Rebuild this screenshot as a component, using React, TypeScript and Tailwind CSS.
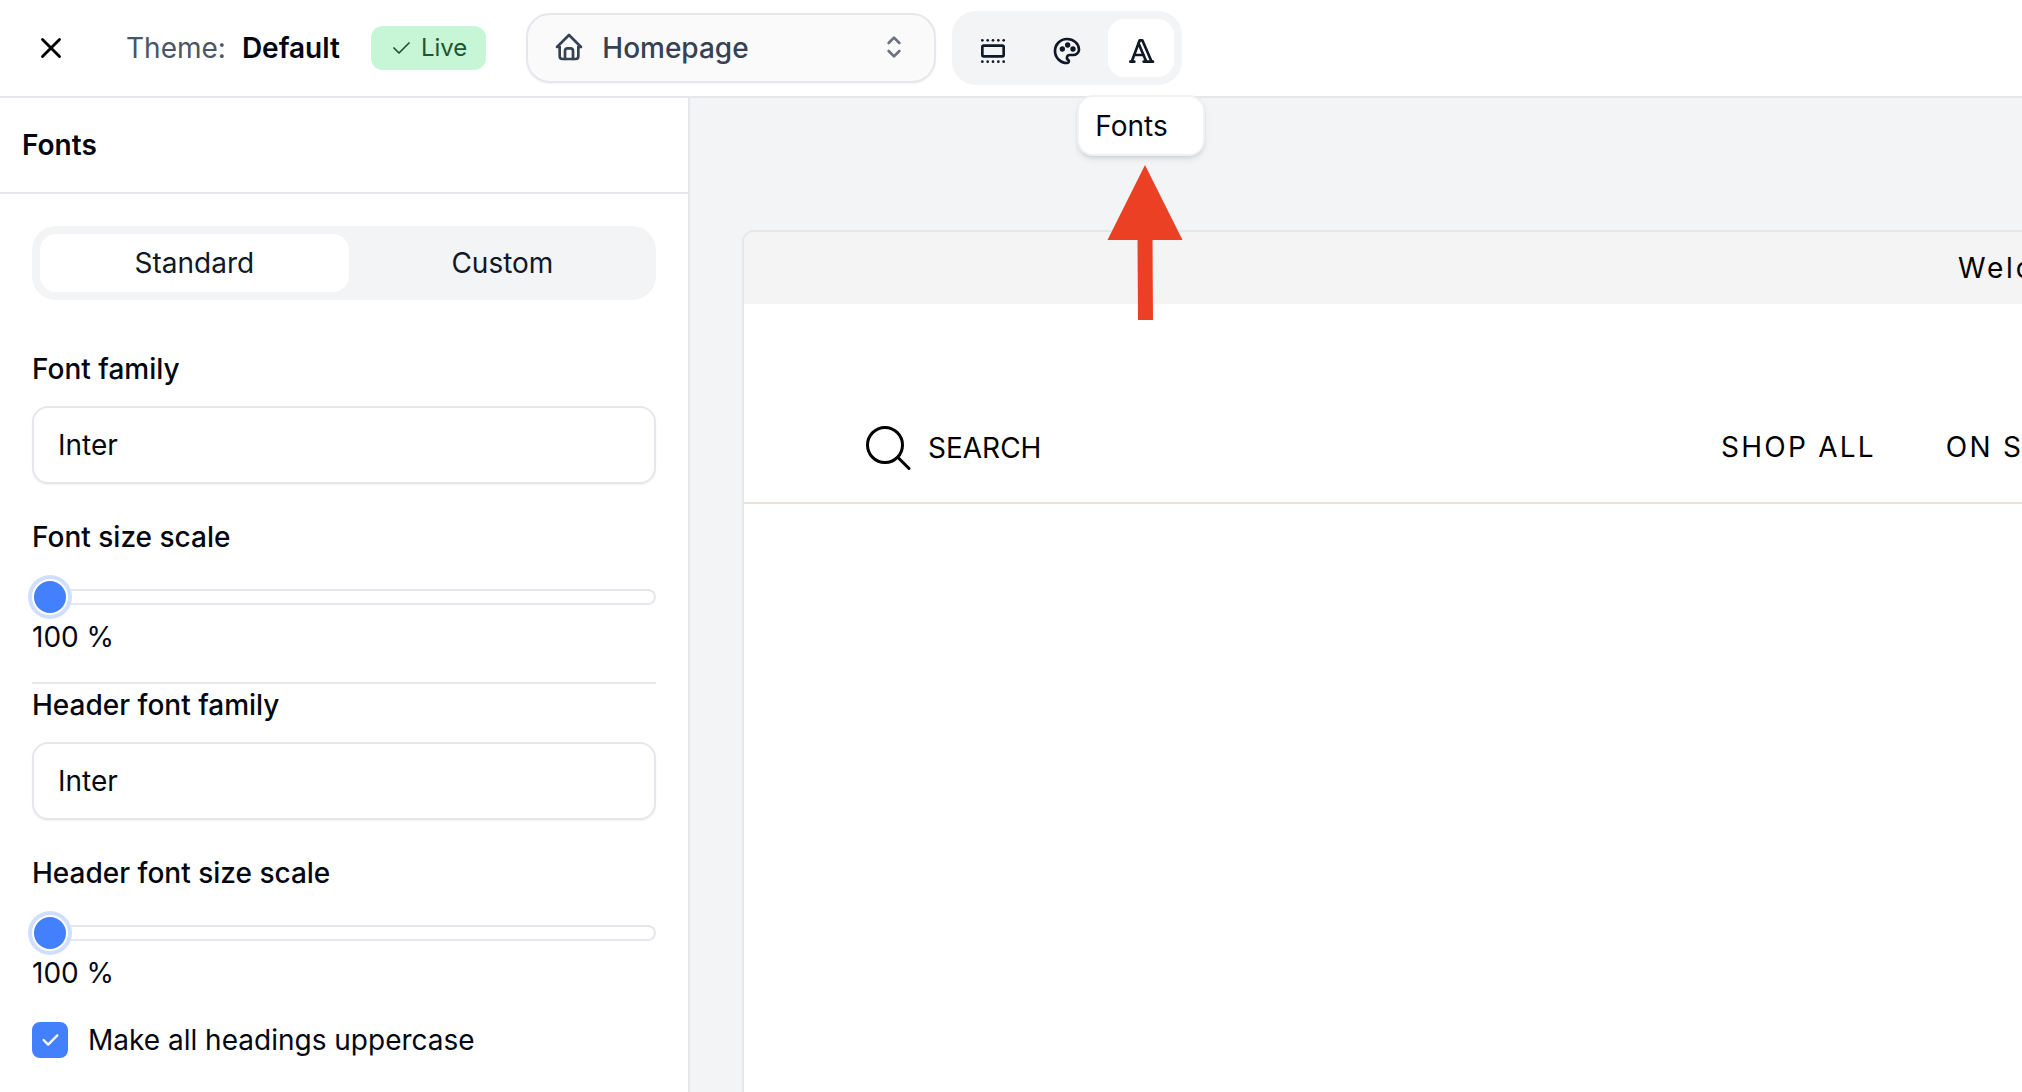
import { useState } from "react";
import {
  TbCheck,
  TbHome,
  TbPalette,
  TbSection,
  TbSelector,
  TbTypography,
  TbX,
} from "react-icons/tb";

const tools = [
  { name: "Sections", Icon: TbSection },
  { name: "Theme colors", Icon: TbPalette },
  { name: "Fonts", Icon: TbTypography },
];

function TopBar() {
  return (
    <header className="flex h-[98px] shrink-0 items-center border-b-2 border-gray-200 bg-white">
      <button type="button" aria-label="Close" className="ml-[34px] text-black">
        <TbX size={34} />
      </button>
      <p className="ml-[58px] flex items-center gap-4">
        <span className="text-gray-600">Theme:</span>
        <strong className="font-semibold">Default</strong>
      </p>
      <span className="ml-[31px] flex h-11 items-center gap-2 rounded-xl bg-[#c6f6d5] pr-[19px] pl-[18px] text-2xl text-[#1f5530]">
        <TbCheck size={24} strokeWidth={1.75} />
        Live
      </span>
      <div className="relative ml-10 h-[70px] w-[410px]">
        <TbHome size={32} className="pointer-events-none absolute top-[18px] left-[27px] text-gray-700" />
        <select
          aria-label="Page"
          className="h-full w-full appearance-none rounded-3xl border-2 border-gray-200 bg-[#fafafa] pr-16 pl-[74px] font-medium text-gray-700 shadow-xs"
        >
          <option>Homepage</option>
        </select>
        <TbSelector size={32} className="pointer-events-none absolute top-[18px] right-[26px] text-gray-500" />
      </div>
      <nav aria-label="Editor panels" className="ml-4 flex gap-2 rounded-3xl bg-gray-100 p-2 text-gray-900">
        {tools.map(({ name, Icon }) => (
          <div key={name} className="relative">
            <button
              type="button"
              aria-label={name}
              className={
                name === "Fonts"
                  ? "flex h-[58px] w-[66px] items-center justify-center rounded-2xl bg-white"
                  : "flex h-[58px] w-[66px] items-center justify-center rounded-2xl"
              }
            >
              <Icon size={32} className="mt-1.5" />
            </button>
            {name === "Fonts" && (
              <>
                <div
                  role="tooltip"
                  className="absolute top-[76px] left-1/2 z-10 -ml-16 flex h-[61px] w-[128px] items-center rounded-2xl border-2 border-gray-200/60 bg-white pl-4 text-gray-950 shadow-md"
                >
                  Fonts
                </div>
                <svg
                  aria-hidden="true"
                  viewBox="0 0 76 155"
                  className="absolute top-[146px] left-1/2 z-10 -ml-[34px] h-[155px] w-[76px] text-[#ec4024]"
                >
                  <path fill="currentColor" d="M38 0 75.500 75H45.500L46 155H31L30.500 75H.5Z" />
                </svg>
              </>
            )}
          </div>
        ))}
      </nav>
    </header>
  );
}

function FontSettings({ id, prefix }: { id: string; prefix: string }) {
  const [scale, setScale] = useState(100);
  const label = (text: string) => (prefix ? `${prefix} ${text.toLowerCase()}` : text);
  return (
    <div className="flex flex-col">
      <label htmlFor={`${id}-family`} className="font-medium">
        {label("Font family")}
      </label>
      <input
        id={`${id}-family`}
        type="text"
        defaultValue="Inter"
        className="mt-[17px] h-[78px] w-full rounded-2xl border-2 border-gray-200 bg-white px-6 shadow-xs"
      />
      <label htmlFor={`${id}-scale`} className="mt-[33px] font-medium">
        {label("Font size scale")}
      </label>
      <input
        id={`${id}-scale`}
        type="range"
        min={100}
        max={200}
        value={scale}
        onChange={(e) => setScale(Number(e.target.value))}
        className="mt-[22px] h-9 w-full appearance-none bg-transparent [&::-webkit-slider-runnable-track]:h-4 [&::-webkit-slider-runnable-track]:rounded-full [&::-webkit-slider-runnable-track]:bg-white [&::-webkit-slider-runnable-track]:shadow-[inset_0_0_0_2px_#e5e7eb] [&::-webkit-slider-thumb]:-mt-2.5 [&::-webkit-slider-thumb]:size-9 [&::-webkit-slider-thumb]:appearance-none [&::-webkit-slider-thumb]:rounded-full [&::-webkit-slider-thumb]:border-2 [&::-webkit-slider-thumb]:border-white [&::-webkit-slider-thumb]:bg-[#4280fe] [&::-webkit-slider-thumb]:shadow-[0_0_0_4px_#d0dfff]"
      />
      <output htmlFor={`${id}-scale`} className="mt-0.5">
        {scale} %
      </output>
    </div>
  );
}

function Sidebar() {
  return (
    <aside className="w-[690px] shrink-0 border-r-2 border-gray-200 bg-white">
      <div className="flex h-24 items-center border-b-2 border-gray-200 px-[22px]">
        <h1 className="font-semibold">Fonts</h1>
      </div>
      <div className="px-8 pt-8">
        <div role="tablist" className="flex gap-2 rounded-3xl bg-gray-100 p-2 text-gray-900">
          <button type="button" role="tab" aria-selected="true" className="h-[58px] flex-auto rounded-2xl bg-white">
            Standard
          </button>
          <button type="button" role="tab" aria-selected="false" className="h-[58px] flex-auto rounded-2xl">
            Custom
          </button>
        </div>
        <div className="mt-[49px]">
          <FontSettings id="body" prefix="" />
        </div>
        <hr className="mt-[25px] mb-px border-t-2 border-gray-200" />
        <FontSettings id="header" prefix="Header" />
        <label className="mt-[27px] flex items-center gap-5">
          <span className="relative flex size-9">
            <input
              type="checkbox"
              defaultChecked
              className="peer size-9 appearance-none rounded-lg border-2 border-gray-200 checked:border-[#4280fe] checked:bg-[#4280fe]"
            />
            <TbCheck
              size={22}
              strokeWidth={2.5}
              className="pointer-events-none absolute top-[7px] left-[7px] hidden text-white peer-checked:block"
            />
          </span>
          Make all headings uppercase
        </label>
      </div>
    </aside>
  );
}

function Preview() {
  return (
    <main className="flex min-w-0 flex-1 flex-col overflow-hidden bg-gray-100 pt-[132px] pl-[52px] text-black">
      <div className="flex flex-1 flex-col overflow-hidden rounded-tl-xl border-t-2 border-l-2 border-gray-200 bg-white">
        <div className="flex h-[72px] justify-end bg-[#f4f4f4]">
          <p className="flex w-16 items-center overflow-hidden whitespace-nowrap tracking-widest">Welcome</p>
        </div>
        <div className="flex items-center border-b-2 border-[#e9e4da] pt-[116px] pb-[26px] pl-[120px]">
          <button type="button" className="flex h-14 items-center gap-4">
            <svg aria-hidden="true" viewBox="0 0 48 48" className="size-12" fill="none" stroke="currentColor" strokeWidth="3" strokeLinecap="round">
              <circle cx="21" cy="21" r="17.500" />
              <path d="m34 33.500 11 11" />
            </svg>
            SEARCH
          </button>
          <nav aria-label="Store" className="ml-auto flex w-[301px] gap-[70px] overflow-hidden pb-0.5 whitespace-nowrap tracking-[0.08em]">
            <a href="#shop-all">SHOP ALL</a>
            <a href="#on-sale">ON SALE</a>
          </nav>
        </div>
      </div>
    </main>
  );
}

export default function App() {
  return (
    <div className="flex min-h-screen flex-col overflow-hidden bg-white font-[Inter,sans-serif] text-[28px] leading-10 text-gray-950">
      <TopBar />
      <div className="flex flex-1">
        <Sidebar />
        <Preview />
      </div>
    </div>
  );
}
